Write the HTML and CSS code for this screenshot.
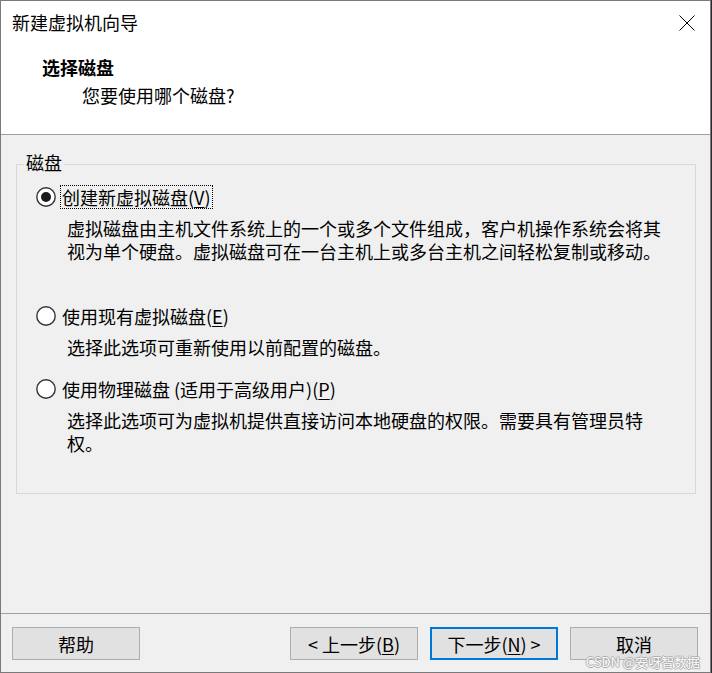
FILE: index.html
```html
<!DOCTYPE html>
<html lang="zh-CN">
<head>
<meta charset="utf-8">
<title>新建虚拟机向导</title>
<link rel="stylesheet" href="styles.css">
</head>
<body>
<div class="window">
  <div class="header">
    <div class="titlebar">
      <span class="title">新建虚拟机向导</span>
      <svg class="close" width="16" height="16" viewBox="0 0 16 16"><path d="M0.5 0.5 L15.5 15.5 M15.5 0.5 L0.5 15.5" stroke="#000" stroke-width="1" fill="none"/></svg>
    </div>
    <div class="heading">选择磁盘</div>
    <div class="subheading">您要使用哪个磁盘?</div>
  </div>
  <div class="content">
    <div class="group">
      <span class="group-label">磁盘</span>
      <div class="option first">
        <svg class="radio" width="20" height="20" viewBox="0 0 20 20"><circle cx="10" cy="10" r="9.2" fill="#fff" stroke="#333" stroke-width="1.4"/><circle cx="10" cy="10" r="5" fill="#1a1a1a"/></svg>
        <span class="label focus">创建新虚拟磁盘(<u>V</u>)</span>
      </div>
      <p class="desc">虚拟磁盘由主机文件系统上的一个或多个文件组成，客户机操作系统会将其视为单个硬盘。虚拟磁盘可在一台主机上或多台主机之间轻松复制或移动。</p>
      <div class="option second">
        <svg class="radio" width="20" height="20" viewBox="0 0 20 20"><circle cx="10" cy="10" r="9.2" fill="#fff" stroke="#333" stroke-width="1.4"/></svg>
        <span class="label">使用现有虚拟磁盘(<u>E</u>)</span>
      </div>
      <p class="desc">选择此选项可重新使用以前配置的磁盘。</p>
      <div class="option third">
        <svg class="radio" width="20" height="20" viewBox="0 0 20 20"><circle cx="10" cy="10" r="9.2" fill="#fff" stroke="#333" stroke-width="1.4"/></svg>
        <span class="label">使用物理磁盘 (适用于高级用户)(<u>P</u>)</span>
      </div>
      <p class="desc">选择此选项可为虚拟机提供直接访问本地硬盘的权限。需要具有管理员特权。</p>
    </div>
  </div>
  <div class="footer">
    <button class="btn">帮助</button>
    <button class="btn push">&lt; 上一步(<u>B</u>)</button>
    <button class="btn default">下一步(<u>N</u>) &gt;</button>
    <button class="btn">取消</button>
  </div>
  <span class="watermark">CSDN @安呀智数据</span>
</div>
</body>
</html>
```
FILE: styles.css
```css
* { box-sizing: border-box; }
html, body { margin: 0; padding: 0; }
body {
  background: #2e2a33;
  font-family: "Noto Sans CJK SC", "Liberation Sans", sans-serif;
  font-size: 18px;
  color: #000;
}
.window {
  position: relative;
  width: 711px;
  height: 673px;
  border: 1px solid #7a7a7a;
  background: #f0f0f0;
  display: flex;
  flex-direction: column;
}
.header {
  height: 134px;
  background: #fff;
  border-bottom: 1px solid #a0a0a0;
  flex: none;
}
.titlebar {
  height: 42px;
  display: flex;
  align-items: center;
  justify-content: space-between;
  padding: 0 15px 0 11px;
}
.title { line-height: 42px; }
.close { display: block; margin-top: 1px; }
.heading {
  margin-top: 12px;
  padding-left: 41px;
  line-height: 24px;
  font-weight: 700;
}
.subheading {
  margin-top: 4px;
  padding-left: 81px;
  line-height: 24px;
}
.content {
  flex: 1;
  padding: 29px 14px 0 15px;
}
.group {
  position: relative;
  height: 330px;
  border: 1px solid #d8d8d8;
  padding: 20px 0 0 19px;
}
.group-label {
  position: absolute;
  top: -14px;
  left: 7px;
  padding: 0 2px;
  line-height: 22px;
  background: #f0f0f0;
}
.option {
  display: flex;
  align-items: center;
  height: 24px;
}
.option.second { margin-top: 41px; }
.option.third { margin-top: 18px; }
.radio { display: block; flex: none; }
.label {
  margin-left: 4px;
  line-height: 22px;
  padding: 0 1px;
  border: 1px solid transparent;
}
.label.focus { border: 1px dotted #000; }
.label u { text-underline-offset: 2px; }
.desc {
  margin: 8px 0 0 31px;
  width: 600px;
  line-height: 23px;
}
.footer {
  flex: none;
  height: 59px;
  border-top: 1px solid #a0a0a0;
  display: flex;
  align-items: flex-start;
  gap: 12px;
  padding: 13px 12px 0 11px;
}
.btn {
  width: 128px;
  height: 33px;
  border: 1px solid #adadad;
  background: #e1e1e1;
  font-family: inherit;
  font-size: 18px;
  line-height: 24px;
  color: #000;
  padding: 0;
}
.btn u { text-underline-offset: 2px; }
.btn.push { margin-left: auto; }
.btn.default { border: 2px solid #0078d7; }
.watermark {
  position: absolute;
  right: 10px;
  bottom: 2px;
  font-size: 13px;
  line-height: 16px;
  color: #fafafa;
  text-shadow: 1px 0 #b0b0b0, -1px 0 #b0b0b0, 0 1px #b0b0b0, 0 -1px #b0b0b0;
}
```
